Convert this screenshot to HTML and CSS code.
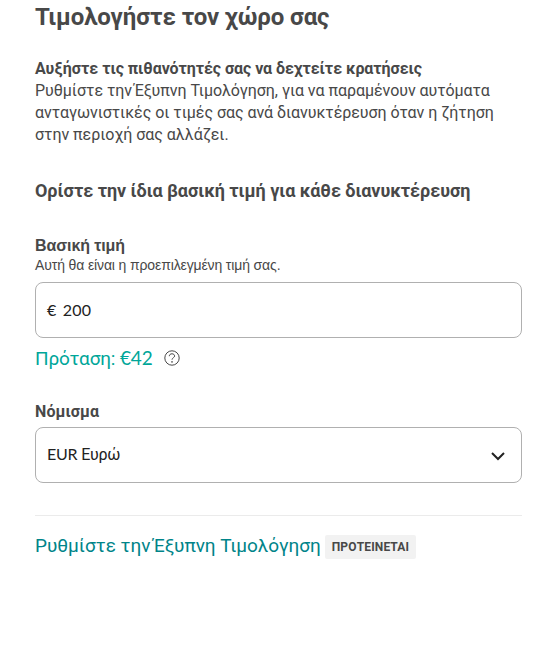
FILE: index.html
```html
<!DOCTYPE html>
<html lang="el">
<head>
    <meta charset="UTF-8">
    <meta name="viewport" content="width=device-width, initial-scale=1.0">
    <title>Τιμολογήστε τον χώρο σας</title>
    <link rel="stylesheet" href="styles.css">
</head>
<body>
    <main class="pricing">
        <h1 class="title">Τιμολογήστε τον χώρο σας</h1>
        <section class="intro">
            <h2 class="intro-title">Αυξήστε τις πιθανότητές σας να δεχτείτε κρατήσεις</h2>
            <p class="intro-text">Ρυθμίστε την<span class="tight"> </span>Έξυπνη Τιμολόγηση, για να παραμένουν αυτόματα<br>ανταγωνιστικές οι τιμές σας ανά διανυκτέρευση όταν η ζήτηση<br>στην περιοχή σας αλλάζει.</p>
        </section>
        <h2 class="subtitle">Ορίστε την ίδια βασική τιμή για κάθε διανυκτέρευση</h2>
        <section class="field">
            <div class="label price-label">Βασική τιμή</div>
            <div class="note">Αυτή θα είναι η προεπιλεγμένη τιμή σας.</div>
            <div class="box"><span class="price">€ 200</span></div>
            <div class="suggestion">
                <span>Πρόταση: <span class="amount">€42</span></span>
                <svg class="help" width="16" height="16" viewBox="0 0 16 16">
                    <circle cx="8" cy="8" r="7.2"/>
                    <path d="M5.3 6.2C5.3 4.6 6.5 3.8 8 3.8s2.6.9 2.6 2.3C10.6 7.6 8 7.9 8 9.7"/>
                    <circle class="dot" cx="8" cy="11.9" r=".8"/>
                </svg>
            </div>
        </section>
        <section class="field currency">
            <div class="label currency-label">Νόμισμα</div>
            <div class="box">
                <span class="value"><span class="code">EUR</span> Ευρώ</span>
                <svg class="chevron" width="16" height="16" viewBox="0 0 16 16">
                    <path d="M2 5l6 6 6-6"/>
                </svg>
            </div>
        </section>
        <div class="smart">
            <a class="smart-link">Ρυθμίστε την<span class="tight"> </span>Έξυπνη Τιμολόγηση</a>
            <span class="badge">ΠΡΟΤΕΙΝΕΤΑΙ</span>
        </div>
    </main>
</body>
</html>
```
FILE: styles.css
```css
body {
    margin: 0;
    background-color: #fff;
    color: #484848;
    font-family: Roboto, "Liberation Sans", sans-serif;
    font-size: 16px;
    line-height: 22px;
}

.pricing {
    width: 487px;
    padding: 3px 0 0 35px;
    white-space: nowrap;
}

h1, h2, p {
    margin: 0;
}

.title {
    font-size: 24px;
    line-height: 28px;
    font-weight: 700;
    letter-spacing: -0.1px;
}

.intro {
    margin-top: 27px;
}

.intro-title {
    font-size: 16px;
    font-weight: 700;
    letter-spacing: -0.04px;
}

.intro-text {
    letter-spacing: -0.04px;
}

.tight {
    word-spacing: -2px;
}

.subtitle {
    margin-top: 33px;
    font-size: 18px;
    line-height: 24px;
    font-weight: 700;
    letter-spacing: -0.05px;
}

.field {
    margin-top: 32px;
}

.label {
    font-weight: 700;
}

.price-label {
    font-family: "Liberation Sans", Arial, sans-serif;
    letter-spacing: -0.1px;
}

.note {
    font-family: "Liberation Sans", Arial, sans-serif;
    font-size: 14px;
    line-height: 16px;
    letter-spacing: -0.13px;
}

.box {
    display: flex;
    justify-content: space-between;
    align-items: center;
    box-sizing: border-box;
    height: 56px;
    margin-top: 9px;
    padding: 0 15px 0 11px;
    border: 1px solid #b0b0b0;
    border-radius: 8px;
    color: #222;
}

.price {
    font-family: Lato, sans-serif;
    letter-spacing: 0.2px;
    word-spacing: 2px;
}

.code,
.amount {
    font-family: Lato, sans-serif;
}

.value {
    margin-top: -2px;
    letter-spacing: -0.2px;
}

.suggestion {
    display: flex;
    align-items: center;
    gap: 11px;
    margin-top: 8px;
    color: #00a699;
    font-size: 19px;
    line-height: 24px;
    letter-spacing: -0.15px;
}

.help {
    margin-top: -2px;
    fill: none;
    stroke: #484848;
    stroke-width: 1;
}

.help .dot {
    fill: #484848;
    stroke: none;
}

.currency {
    margin-top: 30px;
}

.currency-label {
    letter-spacing: 0.1px;
}

.currency .box {
    margin-top: 4px;
}

.chevron {
    margin-top: 1px;
    fill: none;
    stroke: #222;
    stroke-width: 2;
}

.smart {
    display: flex;
    align-items: center;
    gap: 4px;
    margin-top: 32px;
    padding-top: 19px;
    border-top: 1px solid #ebebeb;
}

.smart-link {
    margin-top: -3px;
    color: #008489;
    font-size: 19px;
    line-height: 24px;
    letter-spacing: -0.03px;
}

.badge {
    padding: 0 7px;
    border-radius: 2px;
    background-color: #f2f2f2;
    font-size: 12px;
    line-height: 24px;
    font-weight: 700;
    letter-spacing: 0.15px;
}
```
